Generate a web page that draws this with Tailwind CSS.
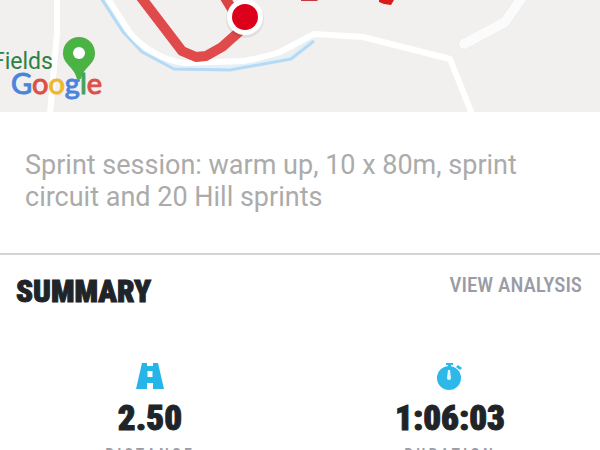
<!DOCTYPE html>
<html lang="en">
<head>
  <meta charset="UTF-8" />
  <meta name="viewport" content="width=device-width, initial-scale=1.0" />
  <title>Activity Summary</title>
  <script src="https://cdn.jsdelivr.net/npm/@tailwindcss/browser@4"></script>
</head>
<body class="bg-white font-['Roboto',sans-serif] overflow-x-hidden">

  <!-- Route map -->
  <header class="relative h-28 bg-[#f1f0ef] overflow-hidden">
    <svg class="block w-full h-full" viewBox="0 0 600 112" preserveAspectRatio="xMinYMin slice" fill="none" stroke-linejoin="round">
      <path d="M57 -2V33L54 67L50 114" stroke="#fff" stroke-width="6"/>
      <path d="M103 -4L124 31L144 50L175 67L230 68L291 57L313 39" stroke="#e3f0f8" stroke-width="5"/>
      <path d="M101 -2L123 32L142 52L174 69L230 70L291 59L314 41" stroke="#b4daf5" stroke-width="3"/>
      <path d="M107 -3L130 33Q140 45 153 52Q168 61 184 63L243 61Q262 58 280 52L314 34L363 37L450 59L472 114" stroke="#fff" stroke-width="6"/>
      <path d="M464 44L505 22L523 -4" stroke="#e8e8e9" stroke-width="11" stroke-linecap="round"/>
      <path d="M464 44L505 22L523 -4" stroke="#fbfbfb" stroke-width="10" stroke-linecap="round"/>
      <path d="M140 -4L182 51L196 57L206 56L222 47L240 31" stroke="#e04a4a" stroke-width="10"/>
      <path d="M224 -4L238 19" stroke="#d94444" stroke-width="10"/>
      <path d="M301 0H318L317 1H301Z" fill="#c8383c"/>
      <path d="M379 0H394L391 5L384 4L379 2Z" fill="#d91b1b"/>
      <circle cx="245" cy="19" r="19" fill="#000" fill-opacity=".07"/>
      <circle cx="245" cy="17" r="18" fill="#fff"/>
      <circle cx="245" cy="17" r="13" fill="#dc001b"/>
      <path d="M79 37C70 37 63 44 63 53C63 65 74 66 77 79H81C84 66 95 65 95 53C95 44 88 37 79 37Z" fill="#4bb244"/>
      <circle cx="79" cy="53" r="6" fill="#fff"/>
    </svg>
    <span class="absolute -left-2 top-12 text-[23px] leading-7 text-[#2c8147]">Fields</span>
    <span class="absolute left-[11px] top-[67px] text-[29px] leading-8 font-['Lato',sans-serif]"><span class="text-[#4a84dc] [-webkit-text-stroke:1px_#4a84dc]">G</span><span class="text-[#db5149] [-webkit-text-stroke:1px_#db5149]">o</span><span class="text-[#efb72e] [-webkit-text-stroke:1px_#efb72e]">o</span><span class="text-[#4a84dc] [-webkit-text-stroke:1px_#4a84dc]">g</span><span class="text-[#43a160] [-webkit-text-stroke:1px_#43a160]">l</span><span class="text-[#db5149] [-webkit-text-stroke:1px_#db5149]">e</span></span>
  </header>

  <!-- Notes -->
  <p class="px-[25px] pt-[37px] pb-10 text-[27px] leading-8 text-[#ababab]">Sprint session: warm up, 10 x 80m, sprint circuit and 20 Hill sprints</p>

  <!-- Summary -->
  <main class="border-t-2 border-[#d4d4d4] font-['Roboto_Condensed','Liberation_Sans_Narrow',sans-serif]">
    <div class="flex justify-between items-start pl-4 pr-[18px] pt-4">
      <h2 class="pt-[3px] text-[31px] leading-9 font-black text-[#202428] [-webkit-text-stroke:1px_#202428]">SUMMARY</h2>
      <a href="#" class="text-[21px] leading-7 font-medium text-[#9a9ca5]">VIEW ANALYSIS</a>
    </div>

    <dl class="grid grid-cols-2 pt-[53px] text-center">
      <div class="flex flex-col items-center">
        <svg class="w-[30px] h-7" viewBox="0 0 30 28" fill="#26b5e8">
          <path fill-rule="evenodd" d="M7 0H12V3H18V0H23L29 26H18V20H12V26H1ZM12.500 8V14H17.500V8Z"/>
        </svg>
        <dd class="pt-2 text-[35px] leading-10 font-black text-[#202428] [-webkit-text-stroke:1px_#202428]">2.50</dd>
        <dt class="order-last pt-1 text-base leading-6 font-medium tracking-[3px] text-[#9a9ca5]">DISTANCE</dt>
      </div>
      <div class="flex flex-col items-center">
        <svg class="w-[30px] h-7" viewBox="0 0 30 28" fill="#2cb8e9">
          <circle cx="14" cy="15" r="12"/>
          <path d="M11 0H18V2H16V5H13V2H11Z"/>
          <path d="M23 2L27 5L25 7L21 4Z"/>
          <path d="M13 7H15L16 15A2 2 0 1 1 12 15Z" fill="#e6f6fc"/>
        </svg>
        <dd class="pt-2 text-[35px] leading-10 font-black text-[#202428] [-webkit-text-stroke:1px_#202428]">1:06:03</dd>
        <dt class="order-last pt-1 text-base leading-6 font-medium tracking-[3px] text-[#9a9ca5]">DURATION</dt>
      </div>
    </dl>
  </main>

</body>
</html>
